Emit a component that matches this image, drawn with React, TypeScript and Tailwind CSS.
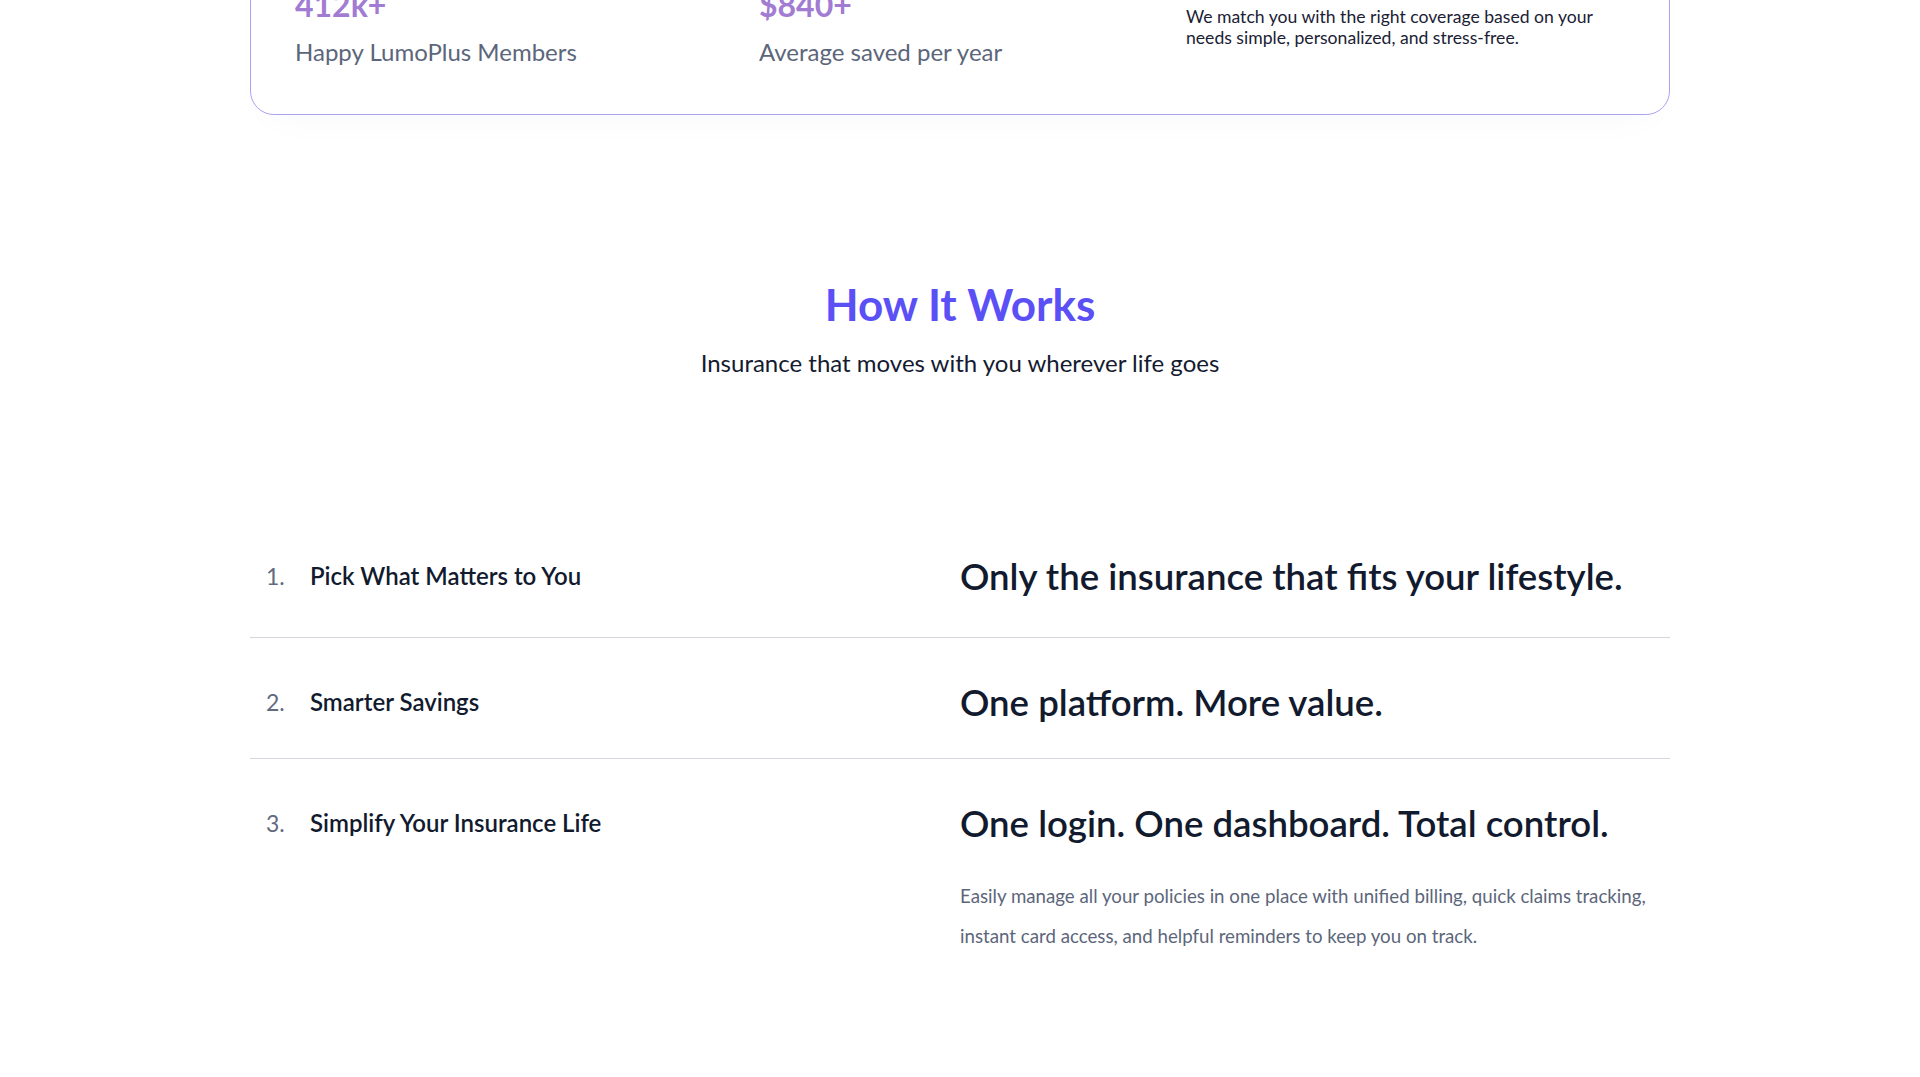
const font = { fontFamily: "Lato, 'Noto Sans', sans-serif" };

const stats = [
  { value: "412k+", label: "Happy LumoPlus Members", width: "w-[464px]" },
  { value: "$840+", label: "Average saved per year", width: "w-[427px]" },
];

const steps = [
  {
    title: "Pick What Matters to You",
    heading: "Only the insurance that fits your lifestyle.",
  },
  {
    title: "Smarter Savings",
    heading: "One platform. More value.",
  },
  {
    title: "Simplify Your Insurance Life",
    heading: "One login. One dashboard. Total control.",
    text: "Easily manage all your policies in one place with unified billing, quick claims tracking, instant card access, and helpful reminders to keep you on track.",
  },
];

const StatsCard = () => (
  <div className="-mt-[62px] flex rounded-3xl border border-[#aaa3f4] bg-white px-11 pt-10 pb-[46px] shadow-[0_18px_40px_-20px_rgba(0,0,0,0.04)]">
    {stats.map((s) => (
      <div key={s.label} className={s.width}>
        <div className="pt-[4px] text-[32px] leading-[44px] font-bold text-[#a27bd2]">{s.value}</div>
        <div className="mt-[9px] text-2xl leading-8 text-[#5c667b]">{s.label}</div>
      </div>
    ))}
    <p className="w-[430px] pt-[27px] text-[17.6px] leading-[21px] text-[#1b2135]">
      We match you with the right coverage based on your needs simple, personalized, and stress-free.
    </p>
  </div>
);

const StepRow = ({ n, step, first, last }: { n: number; step: (typeof steps)[number]; first: boolean; last: boolean }) => (
  <div
    className={`grid grid-cols-2 pt-[42px] ${first ? "pb-[39px]" : "pb-[34px]"} ${last ? "" : "border-b border-[#d5d5dd]"}`}
  >
    <div className="flex items-center self-start px-4 leading-[44px]">
      <span className="w-[44px] text-[23px] text-[#626a7e]">{n}.</span>
      <span className="text-[24px] font-semibold text-[#121a2e]">{step.title}</span>
    </div>
    <div>
      <h3 className="text-[36.6px] leading-[44px] font-semibold text-[#121a2e]">{step.heading}</h3>
      {step.text && (
        <p className="mt-[31px] max-w-[705px] text-[18.7px] leading-10 text-[#5c667b]">{step.text}</p>
      )}
    </div>
  </div>
);

export default function App() {
  return (
    <div className="min-h-screen overflow-hidden bg-white" style={font}>
      <div className="mx-auto w-[1420px]">
        <StatsCard />

        <section className="pt-[162px] text-center">
          <h2 className="text-[44px] leading-[54px] font-bold text-[#5a50f6]">How It Works</h2>
          <p className="mt-[16px] text-[24px] leading-8 text-[#141b30]">
            Insurance that moves with you wherever life goes
          </p>
        </section>

        <div className="mt-[133px] pb-24">
          {steps.map((s, i) => (
            <StepRow key={s.title} n={i + 1} step={s} first={i === 0} last={i === steps.length - 1} />
          ))}
        </div>
      </div>
    </div>
  );
}
